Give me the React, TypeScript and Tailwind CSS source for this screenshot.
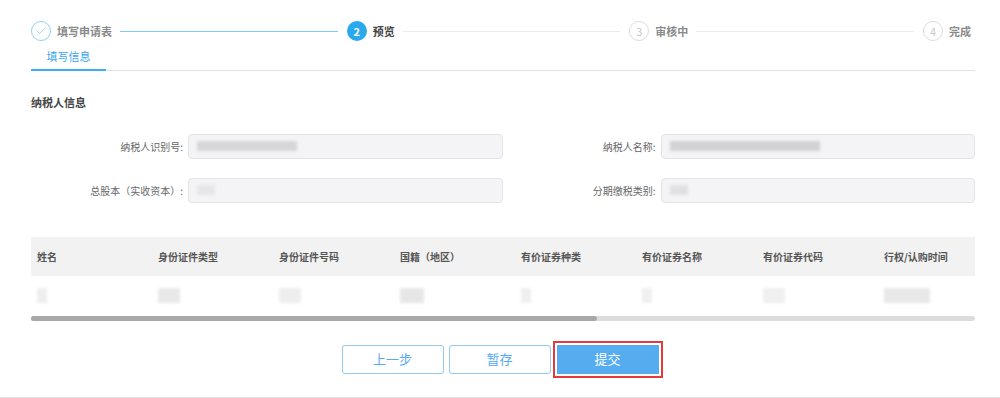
import { Check } from 'lucide-react'

const font = { fontFamily: '"Noto Sans CJK SC", "Noto Sans", sans-serif' }

type Step = { no: number; label: string; state: 'done' | 'active' | 'todo' }

const steps: Step[] = [
    { no: 1, label: '填写申请表', state: 'done' },
    { no: 2, label: '预览', state: 'active' },
    { no: 3, label: '审核中', state: 'todo' },
    { no: 4, label: '完成', state: 'todo' },
]

const columns = ['姓名', '身份证件类型', '身份证件号码', '国籍（地区）', '有价证券种类', '有价证券名称', '有价证券代码', '行权/认购时间']

// blurred cell values, widths guessed from the picture
const blurs = [
    'w-[10px] bg-[#eeeeee]',
    'w-[22px] bg-[#e9e9e9]',
    'w-[22px] bg-[#eeeeee]',
    'w-[24px] bg-[#e6e6e6]',
    'w-[10px] bg-[#efefef]',
    'w-[10px] bg-[#f0f0f0]',
    'w-[22px] bg-[#f0f0f0]',
    'w-[46px] bg-[#e8e8e8]',
]

function StepCircle({ step }: { step: Step }) {
    if (step.state === 'done') {
        return (
            <div className="w-5 h-5 rounded-full border border-[#8fd1f4] flex items-center justify-center">
                <Check size={12} strokeWidth={1.6} className="text-[#8fd1f4]" />
            </div>
        )
    }
    if (step.state === 'active') {
        return (
            <div className="w-5 h-5 rounded-full bg-[#2aa9ef] text-white text-[11px] font-bold flex items-center justify-center">
                {step.no}
            </div>
        )
    }
    return (
        <div className="w-5 h-5 rounded-full border border-[#dcdcdc] text-[#c8c8c8] text-[11px] flex items-center justify-center">
            {step.no}
        </div>
    )
}

function Field({ label, blur }: { label: string; blur: string }) {
    return (
        <div className="flex items-center gap-[5px]">
            <div className="w-[152px] text-right text-[10px] text-[#666]">{label}</div>
            <div className="flex-1 h-[25px] rounded-[4px] border border-[#e4e4e6] bg-[#f4f4f6] flex items-center px-[8px]">
                <div className={`h-[10px] blur-[1.5px] ${blur}`} />
            </div>
        </div>
    )
}

export default function App() {
    return (
        <div className="w-[1000px] h-[398px] bg-white overflow-hidden border-b border-[#e6e6e6]" style={font}>
            <div className="pl-[31px] pr-[25px]">
                {/* steps */}
                <div className="flex items-center h-[20px] mt-[21px] pr-[4px]">
                    {steps.map((s, i) => (
                        <div key={s.no} className="contents">
                            <StepCircle step={s} />
                            <span
                                className={
                                    'ml-[6px] text-[11px] font-bold whitespace-nowrap ' +
                                    (s.state === 'active' ? 'text-[#444]' : 'text-[#8a8a8a]')
                                }
                            >
                                {s.label}
                            </span>
                            {i < steps.length - 1 && (
                                <div
                                    className={
                                        'flex-1 h-[1px] ml-[8px] mr-[9px] ' +
                                        (s.state === 'done' ? 'bg-[#7fcbf3]' : 'bg-[#ececec]')
                                    }
                                />
                            )}
                        </div>
                    ))}
                </div>

                {/* tab */}
                <div className="mt-[7px] border-b border-[#e2e2e2] flex">
                    <div className="w-[75px] h-[23px] border-b-2 border-[#3bb0f0] -mb-[1px] text-[11px] text-[#36a6ef] text-center leading-[17px]">
                        填写信息
                    </div>
                </div>

                <div className="mt-[23px] text-[11px] font-bold text-[#444]">纳税人信息</div>

                {/* form */}
                <div className="mt-[23px] grid grid-cols-2 gap-y-[19px] gap-x-[1px]">
                    <Field label="纳税人识别号:" blur="w-[100px] bg-[#d6d6d6]" />
                    <Field label="纳税人名称:" blur="w-[150px] bg-[#d2d2d2]" />
                    <Field label="总股本（实收资本）:" blur="w-[18px] bg-[#e6e6e6]" />
                    <Field label="分期缴税类别:" blur="w-[18px] bg-[#e0e0e0]" />
                </div>

                {/* table */}
                <div className="mt-[34px] overflow-hidden">
                    <div className="w-[968px]">
                        <div className="flex h-[39px] bg-[#f2f2f2] items-center">
                            {columns.map((c) => (
                                <div key={c} className="w-[121px] pl-[6px] text-[10px] font-bold text-[#555] whitespace-nowrap">
                                    {c}
                                </div>
                            ))}
                        </div>
                        <div className="flex h-[40px] items-center">
                            {blurs.map((b, i) => (
                                <div key={i} className="w-[121px] pl-[6px]">
                                    <div className={`h-[15px] blur-[1.5px] ${b}`} />
                                </div>
                            ))}
                        </div>
                    </div>
                </div>
                <div className="h-[5px] rounded-full bg-[#dcdcdc]">
                    <div className="h-[5px] w-[566px] rounded-full bg-[#a8a8a8]" />
                </div>

                {/* buttons */}
                <div className="mt-[24px] flex justify-center gap-[5px] pr-[6px]">
                    <button className="w-[102px] h-[29px] rounded-[3px] border border-[#93c8f0] text-[#58aaee] text-[13px] bg-white">
                        上一步
                    </button>
                    <button className="w-[102px] h-[29px] rounded-[3px] border border-[#93c8f0] text-[#58aaee] text-[13px] bg-white">
                        暂存
                    </button>
                    <button className="ml-[1px] w-[102px] h-[29px] rounded-none bg-[#55adf0] text-white text-[13px] outline-2 outline-[#e53a3a] outline-offset-2">
                        提交
                    </button>
                </div>
            </div>
        </div>
    )
}
